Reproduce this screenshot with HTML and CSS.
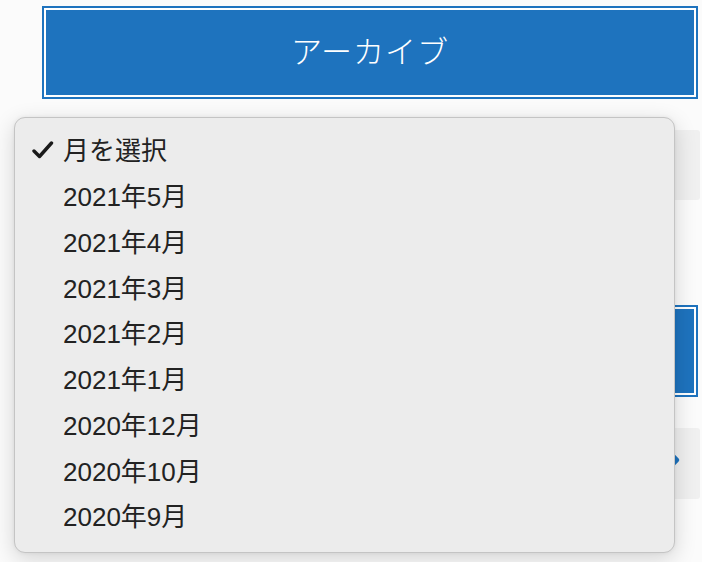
FILE: index.html
```html
<!DOCTYPE html>
<html lang="ja">
<head>
<meta charset="utf-8">
<title>アーカイブ</title>
<link rel="stylesheet" href="styles.css">
</head>
<body>
<div class="page">
  <button class="btn btn-top">アーカイブ</button>
  <div class="box box-select"></div>
  <div class="spacer"></div>
  <div class="btn btn-mid"></div>
  <div class="box box-last"><span class="mark"></span></div>
</div>

<div class="menu" role="listbox">
  <div class="item selected">
    <svg class="check" width="22" height="18" viewBox="0 0 22 18"><path d="M2 10 L7.5 15.5 L19.5 2" fill="none" stroke="#1a1a1a" stroke-width="3.4" stroke-linecap="round" stroke-linejoin="round"/></svg>
    <span>月を選択</span>
  </div>
  <div class="item"><span>2021年5月</span></div>
  <div class="item"><span>2021年4月</span></div>
  <div class="item"><span>2021年3月</span></div>
  <div class="item"><span>2021年2月</span></div>
  <div class="item"><span>2021年1月</span></div>
  <div class="item"><span>2020年12月</span></div>
  <div class="item"><span>2020年10月</span></div>
  <div class="item"><span>2020年9月</span></div>
</div>
</body>
</html>
```

FILE: styles.css
```css
* { box-sizing: border-box; }
html, body { margin: 0; padding: 0; }
body {
  width: 702px;
  height: 562px;
  overflow: hidden;
  background: #fbfbfb;
  font-family: "Liberation Sans", "Noto Sans CJK JP", sans-serif;
  position: relative;
}
.page {
  display: flex;
  flex-direction: column;
  padding: 6px 2px 0 40px;
}
.btn {
  display: flex;
  align-items: center;
  justify-content: center;
  margin: 0 2px;
  height: 93px;
  background: #1e73be;
  border: 2px solid #1e73be;
  box-shadow: inset 0 0 0 2px #ffffff;
  color: #ffffff;
  font-family: "Noto Sans CJK JP", sans-serif;
  font-weight: 300;
  font-size: 31px;
  letter-spacing: 1px;
  padding: 0 0 6px 0;
}
.box {
  background: #f0f0f0;
  border-radius: 3px;
}
.box-select {
  margin-top: 31px;
  height: 70px;
}
.spacer { height: 105px; }
.btn-mid { height: 92px; }
.box-last {
  margin-top: 31px;
  height: 71px;
  position: relative;
}
.mark {
  position: absolute;
  left: 628px;
  top: 27px;
  width: 10px;
  height: 10px;
  background: #1e73be;
  transform: rotate(45deg);
  border-radius: 2px;
}
.menu {
  position: absolute;
  left: 14px;
  top: 117px;
  width: 661px;
  height: 436px;
  background: #ececec;
  border: 1px solid #c4c4c4;
  border-radius: 11px;
  box-shadow: 0 6px 22px rgba(0, 0, 0, 0.16), 0 0 4px rgba(0, 0, 0, 0.06);
  padding: 8px 0 14px 0;
  display: flex;
  flex-direction: column;
}
.item {
  height: 45.75px;
  display: flex;
  align-items: center;
  padding-left: 48px;
  position: relative;
  font-size: 26px;
  color: #222222;
}
.check {
  position: absolute;
  left: 17px;
  top: 15px;
}
```
